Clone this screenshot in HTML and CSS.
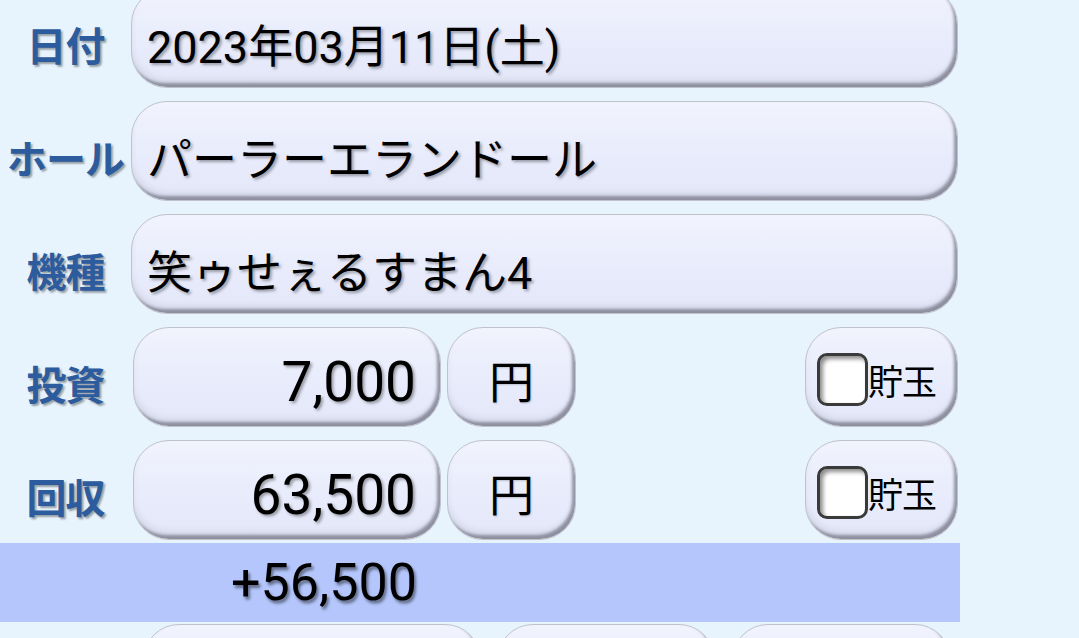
FILE: index.html
```html
<!DOCTYPE html>
<html lang="ja">
<head>
<meta charset="utf-8">
<title>収支入力</title>
<link rel="stylesheet" href="styles.css">
</head>
<body>
<div class="page">
  <div class="row row-first">
    <div class="label">日付</div>
    <div class="btn field wide">2023年03月11日(土)</div>
  </div>
  <div class="row">
    <div class="label">ホール</div>
    <div class="btn field wide">パーラーエランドール</div>
  </div>
  <div class="row">
    <div class="label">機種</div>
    <div class="btn field wide">笑ゥせぇるすまん4</div>
  </div>
  <div class="row">
    <div class="label">投資</div>
    <div class="btn field amount">7,000</div>
    <div class="btn unit">円</div>
    <div class="spacer"></div>
    <div class="btn chk"><span class="box"></span><span class="chk-text">貯玉</span></div>
  </div>
  <div class="row">
    <div class="label">回収</div>
    <div class="btn field amount">63,500</div>
    <div class="btn unit">円</div>
    <div class="spacer"></div>
    <div class="btn chk"><span class="box"></span><span class="chk-text">貯玉</span></div>
  </div>
  <div class="result">+56,500</div>
  <div class="bottom">
    <div class="btn b1"></div>
    <div class="btn b2"></div>
    <div class="btn b3"></div>
  </div>
</div>
</body>
</html>
```
FILE: styles.css
```css
html, body {
  margin: 0;
  padding: 0;
  height: 100%;
  overflow: hidden;
}
body {
  background: #e7f4fe;
  font-family: Roboto, "Noto Sans CJK JP", sans-serif;
  color: #000;
}
.page {
  width: 960px;
}
.row {
  display: flex;
  align-items: center;
  height: 100px;
  margin-bottom: 13px;
}
.row-first {
  margin-top: -12px;
}
.label {
  width: 131px;
  flex: none;
  text-align: center;
  font-family: "Noto Sans CJK JP", sans-serif;
  font-weight: 700;
  font-size: 40px;
  letter-spacing: -1px;
  color: #2d5c9e;
  text-shadow: 2px 2px 2px rgba(0, 0, 0, 0.35);
  padding-top: 12px;
  white-space: nowrap;
}
.btn {
  box-sizing: border-box;
  height: 100px;
  border: 1px solid #bfc2cb;
  border-radius: 36px;
  background: linear-gradient(#f1f3fd, #e7ebfb 60%, #e3e7f8);
  box-shadow: inset -3px -4px 3px rgba(70, 70, 85, 0.5), inset 0 -8px 6px rgba(0, 0, 0, 0.06);
  display: flex;
  align-items: center;
  flex: none;
}
.field {
  font-size: 45px;
  text-shadow: 2px 2px 3px rgba(0, 0, 0, 0.35);
  padding-top: 10px;
}
.wide {
  width: 827px;
  padding-left: 15px;
}
.amount {
  width: 308px;
  margin-left: 2px;
  justify-content: flex-end;
  padding-right: 24px;
  font-size: 55px;
}
.unit {
  width: 129px;
  margin-left: 6px;
  justify-content: center;
  font-family: "Noto Sans CJK JP", sans-serif;
  font-size: 45px;
  padding-top: 4px;
  text-shadow: 1px 1px 2px rgba(0, 0, 0, 0.2);
}
.spacer {
  flex: 1;
}
.chk {
  width: 153px;
  margin-right: 2px;
  padding-left: 11px;
  padding-top: 4px;
}
.box {
  box-sizing: border-box;
  width: 51px;
  height: 53px;
  border: 3px solid #3a3a3a;
  border-radius: 10px;
  background: #fff;
  box-shadow: inset 3px 3px 4px rgba(0, 0, 0, 0.45);
  flex: none;
}
.chk-text {
  font-family: "Noto Sans CJK JP", sans-serif;
  font-size: 35px;
  margin-left: 0;
  letter-spacing: -1px;
}
.result {
  margin-top: -10px;
  height: 79px;
  background: #b4c6fb;
  display: flex;
  align-items: center;
  padding-left: 231px;
  font-size: 52px;
  text-shadow: 2px 3px 3px rgba(0, 0, 0, 0.45);
}
.bottom {
  display: flex;
  margin-top: 2px;
  padding-left: 143px;
}
.bottom .btn {
  height: 80px;
}
.b1 { width: 338px; }
.b2 { width: 218px; margin-left: 16px; }
.b3 { width: 219px; margin-left: 17px; }
```
